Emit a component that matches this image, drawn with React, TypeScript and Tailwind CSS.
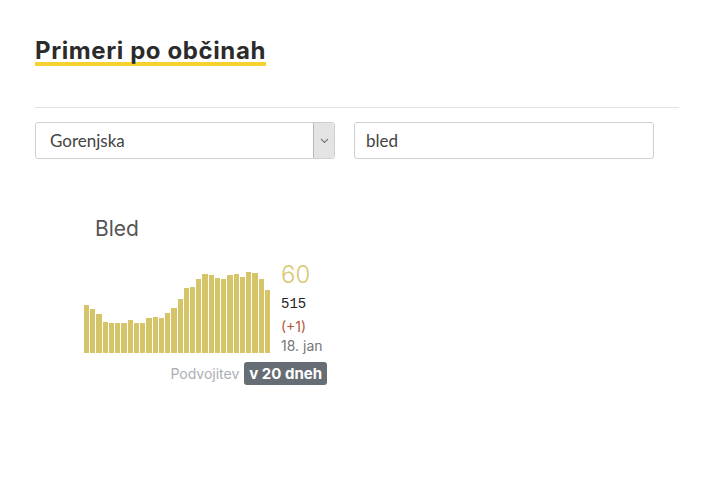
import React from "react";

const bars = [48, 44, 39, 31, 30, 30, 30, 33, 30, 30, 35, 36, 35, 40, 45, 54, 65, 66, 74, 79, 78, 75, 74, 78, 79, 76, 81, 80, 74, 63];

export default function App() {
  return (
    <div className="min-h-[499px] bg-white">
      <div className="ml-[35px] w-[644px] pt-[35px]">
        <h2 className="text-[24px] font-bold leading-[32px] text-[#2b2b2b] [font-family:Inter,'Noto_Sans',sans-serif] tracking-[0.6px]">
          <span className="underline decoration-[#f5d232] decoration-[4px] underline-offset-[3px] [text-decoration-skip-ink:none]">
            Primeri po občinah
          </span>
        </h2>
        <div className="mt-[40px] h-px bg-[#e2e2e2]" />
        <div className="mt-[14px] flex gap-[19px] [font-family:Lato,'Noto_Sans',sans-serif]">
          <div className="flex h-[37px] w-[300px] items-stretch rounded-[3px] border border-[#cfcfcf] bg-white">
            <div className="flex flex-1 items-center pl-[14px] text-[17px] text-[#444]">Gorenjska</div>
            <div className="flex w-[21px] items-center justify-center rounded-r-[3px] border-l border-[#b9b9b9] bg-[#e4e4e4]">
              <svg width="9" height="6" viewBox="0 0 9 6" fill="none">
                <path d="M1 1l3.5 3.5L8 1" stroke="#777" strokeWidth="1.1" />
              </svg>
            </div>
          </div>
          <div className="flex h-[37px] w-[300px] items-center rounded-[3px] border border-[#cfcfcf] bg-white pl-[11px] text-[17px] text-[#444]">
            bled
          </div>
        </div>
        <div className="ml-[49px] mt-[56px] w-[243px]">
          <div className="pl-[11px] text-[21px] leading-[28px] text-[#555] [font-family:Inter,'Noto_Sans',sans-serif]">Bled</div>
          <div className="mt-[17px] flex items-end gap-[11px]">
            <div className="flex h-[82px] w-[186px] items-end gap-[1px]">
              {bars.map((h, i) => (
                <div key={i} className="flex-1 bg-[#d6c468]" style={{ height: h }} />
              ))}
            </div>
            <div className="flex flex-col [font-family:Inter,'Noto_Sans',sans-serif]">
              <div className="mb-[3px] text-[24px] leading-[30px] font-light text-[#d7c772]">60</div>
              <div className="text-[14px] leading-[22px] text-[#222] [font-family:'Liberation_Mono',monospace]">515</div>
              <div className="text-[14px] leading-[23px] text-[#b5553d]">(+1)</div>
              <div className="text-[14px] leading-[15px] text-[#777]">18. jan</div>
            </div>
          </div>
          <div className="mt-[9px] flex items-center justify-end gap-[5px] [font-family:Inter,'Noto_Sans',sans-serif]">
            <span className="text-[14px] text-[#a9aeb3]">Podvojitev</span>
            <span className="rounded-[3px] bg-[#676d74] px-[5px] text-[15px] font-bold leading-[23px] text-white">v 20 dneh</span>
          </div>
        </div>
      </div>
    </div>
  );
}
